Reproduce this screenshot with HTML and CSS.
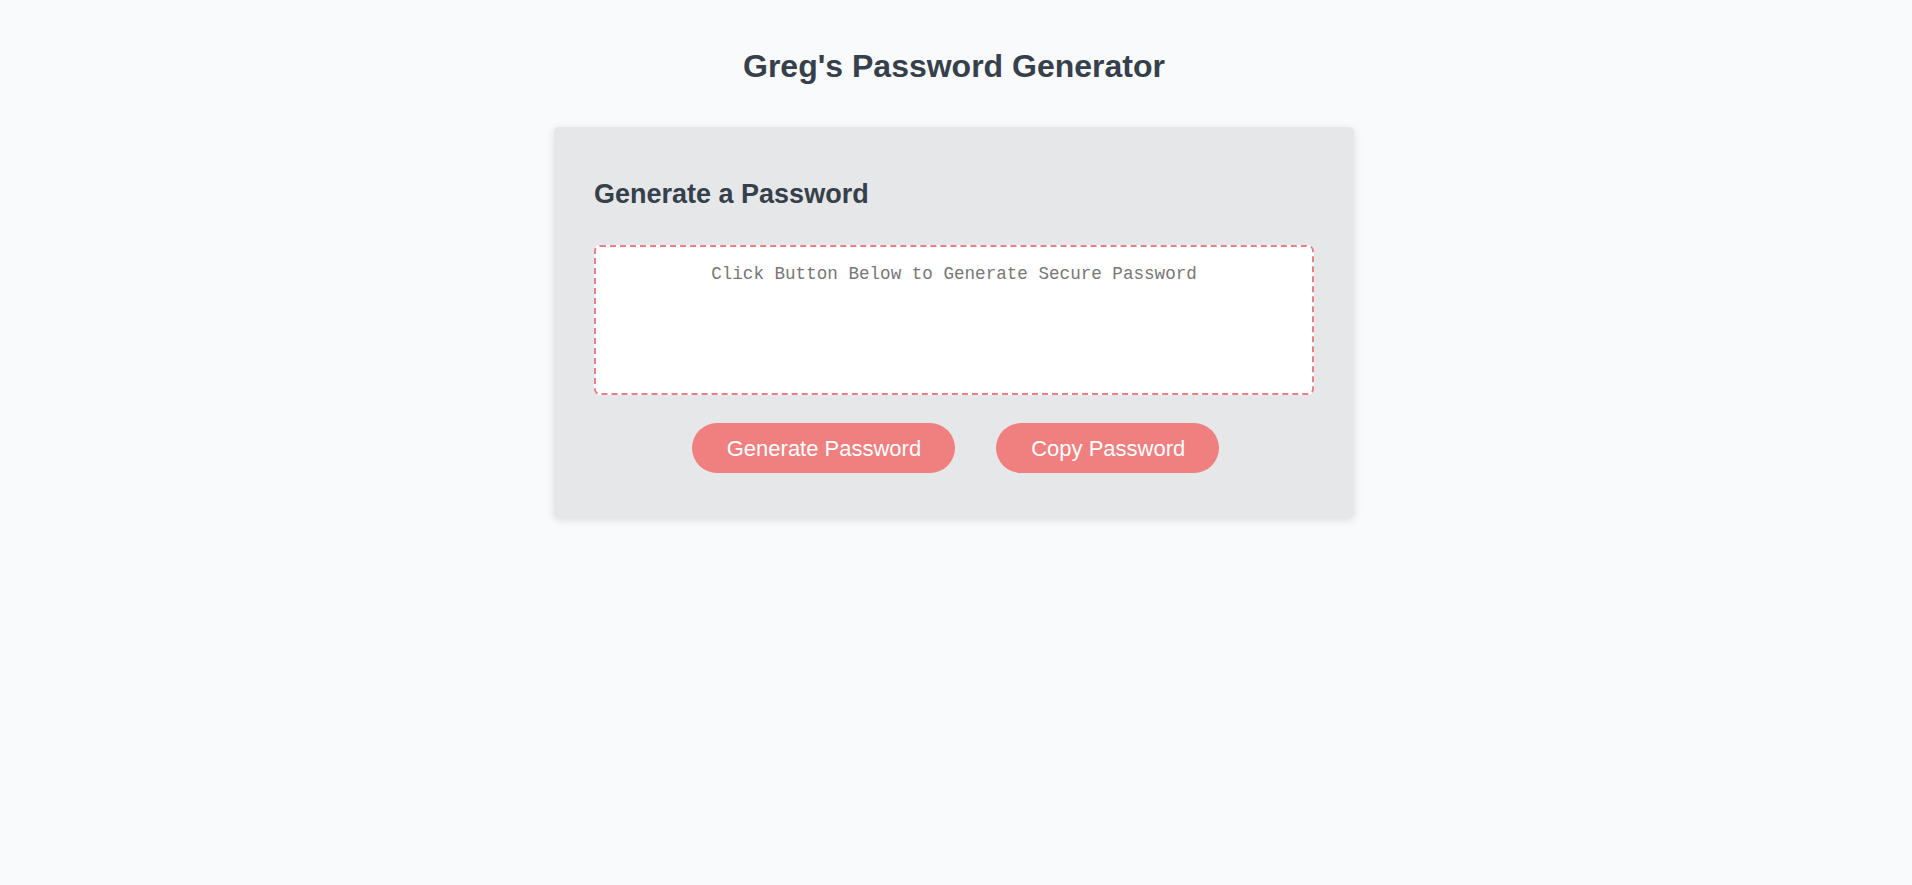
FILE: index.html
```html
<!DOCTYPE html>
<html lang="en">
<head>
<meta charset="UTF-8">
<title>Greg's Password Generator</title>
<link rel="stylesheet" href="styles.css">
</head>
<body>
  <header class="header">
    <h1 class="title">Greg's Password Generator</h1>
  </header>
  <main class="wrapper">
    <section class="card">
      <h2 class="card-title">Generate a Password</h2>
      <textarea class="password" readonly placeholder="Click Button Below to Generate Secure Password"></textarea>
      <div class="actions">
        <button class="btn" type="button">Generate Password</button>
        <button class="btn" type="button">Copy Password</button>
      </div>
    </section>
  </main>
</body>
</html>
```

FILE: styles.css
```css
* {
  box-sizing: border-box;
}

html, body {
  margin: 0;
  padding: 0;
}

body {
  background: #f9fafb;
  color: #36404a;
  font-family: "Liberation Sans", Arial, sans-serif;
  min-height: 885px;
  padding-right: 4px;
}

.header {
  padding-top: 48px;
  text-align: center;
}

.title {
  margin: 0;
  font-size: 32px;
  font-weight: bold;
  line-height: 37px;
  color: #36404a;
}

.wrapper {
  display: flex;
  justify-content: center;
  margin-top: 42px;
}

.card {
  width: 800px;
  padding: 40px 40px 45px;
  background: #e6e7e9;
  border-radius: 5px;
  box-shadow: 0 2px 8px rgba(0, 0, 0, 0.12);
  display: flex;
  flex-direction: column;
}

.card-title {
  margin: 12px 0 35px;
  font-size: 27px;
  line-height: 31px;
  font-weight: bold;
  color: #36404a;
}

.password {
  display: block;
  width: 720px;
  height: 150px;
  padding: 17px 10px;
  border: 2px dashed #e8808a;
  border-radius: 6px;
  background: #ffffff;
  resize: none;
  outline: none;
  text-align: center;
  font-family: "Liberation Mono", "DejaVu Sans Mono", monospace;
  font-size: 17.6px;
  line-height: 20px;
  color: #444;
}

.password::placeholder {
  color: #777777;
  opacity: 1;
}

.actions {
  display: flex;
  justify-content: center;
  gap: 41px;
  margin-top: 28px;
  padding-left: 3px;
}

.btn {
  height: 50px;
  padding: 0 34px 0 35px;
  border: none;
  border-radius: 25px;
  background: #f08080;
  color: #ffffff;
  font-family: "Liberation Sans", Arial, sans-serif;
  font-size: 22px;
  line-height: 25px;
  cursor: pointer;
}
```
